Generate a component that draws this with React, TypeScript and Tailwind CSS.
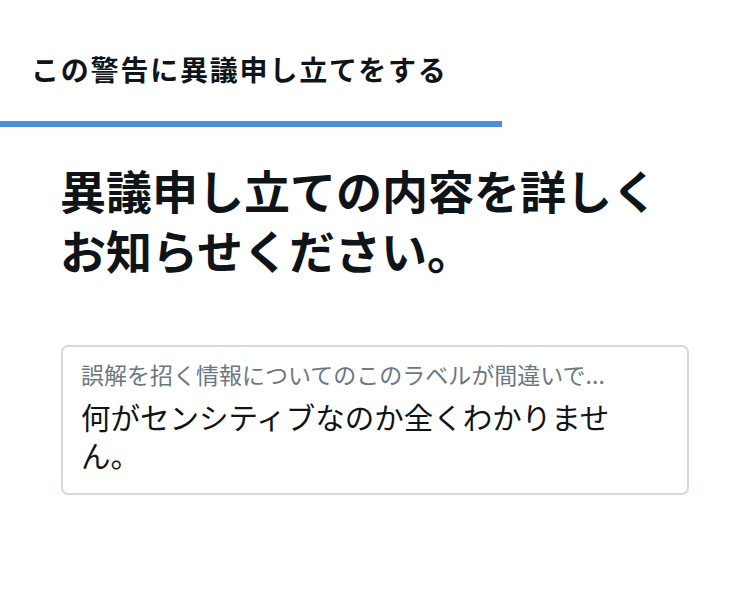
export default function App() {
  const jp = { fontFamily: '"Noto Sans CJK JP", "Noto Sans", sans-serif' };
  return (
    <div className="w-[750px] h-[613px] bg-white text-[#0f1419]" style={jp}>
      <div className="w-[502px]">
        <div className="pl-[31px] pt-[49px] h-[121px]">
          <div className="text-[28px] font-bold leading-[40px] tracking-[1.8px]">この警告に異議申し立てをする</div>
        </div>
        <div className="h-[6px] bg-[#4a90d9]" />
      </div>
      <div className="pl-[60px] pr-[62px] pt-[32px]">
        <h1 className="text-[46px] font-bold leading-[60px]">異議申し立ての内容を詳しくお知らせください。</h1>
      </div>
      <div className="mx-[61px] mt-[66px] h-[150px] border-2 border-[#d3d9de] rounded-[7px] pl-[18px] pr-[70px] pt-[11px]">
        <div className="text-[23px] leading-[32px] text-[#6b7781] whitespace-nowrap">誤解を招く情報についてのこのラベルが間違いで...</div>
        <div className="mt-[7px] text-[29.5px] leading-[38px] text-[#0f1419]">何がセンシティブなのか全くわかりません。</div>
      </div>
    </div>
  );
}
